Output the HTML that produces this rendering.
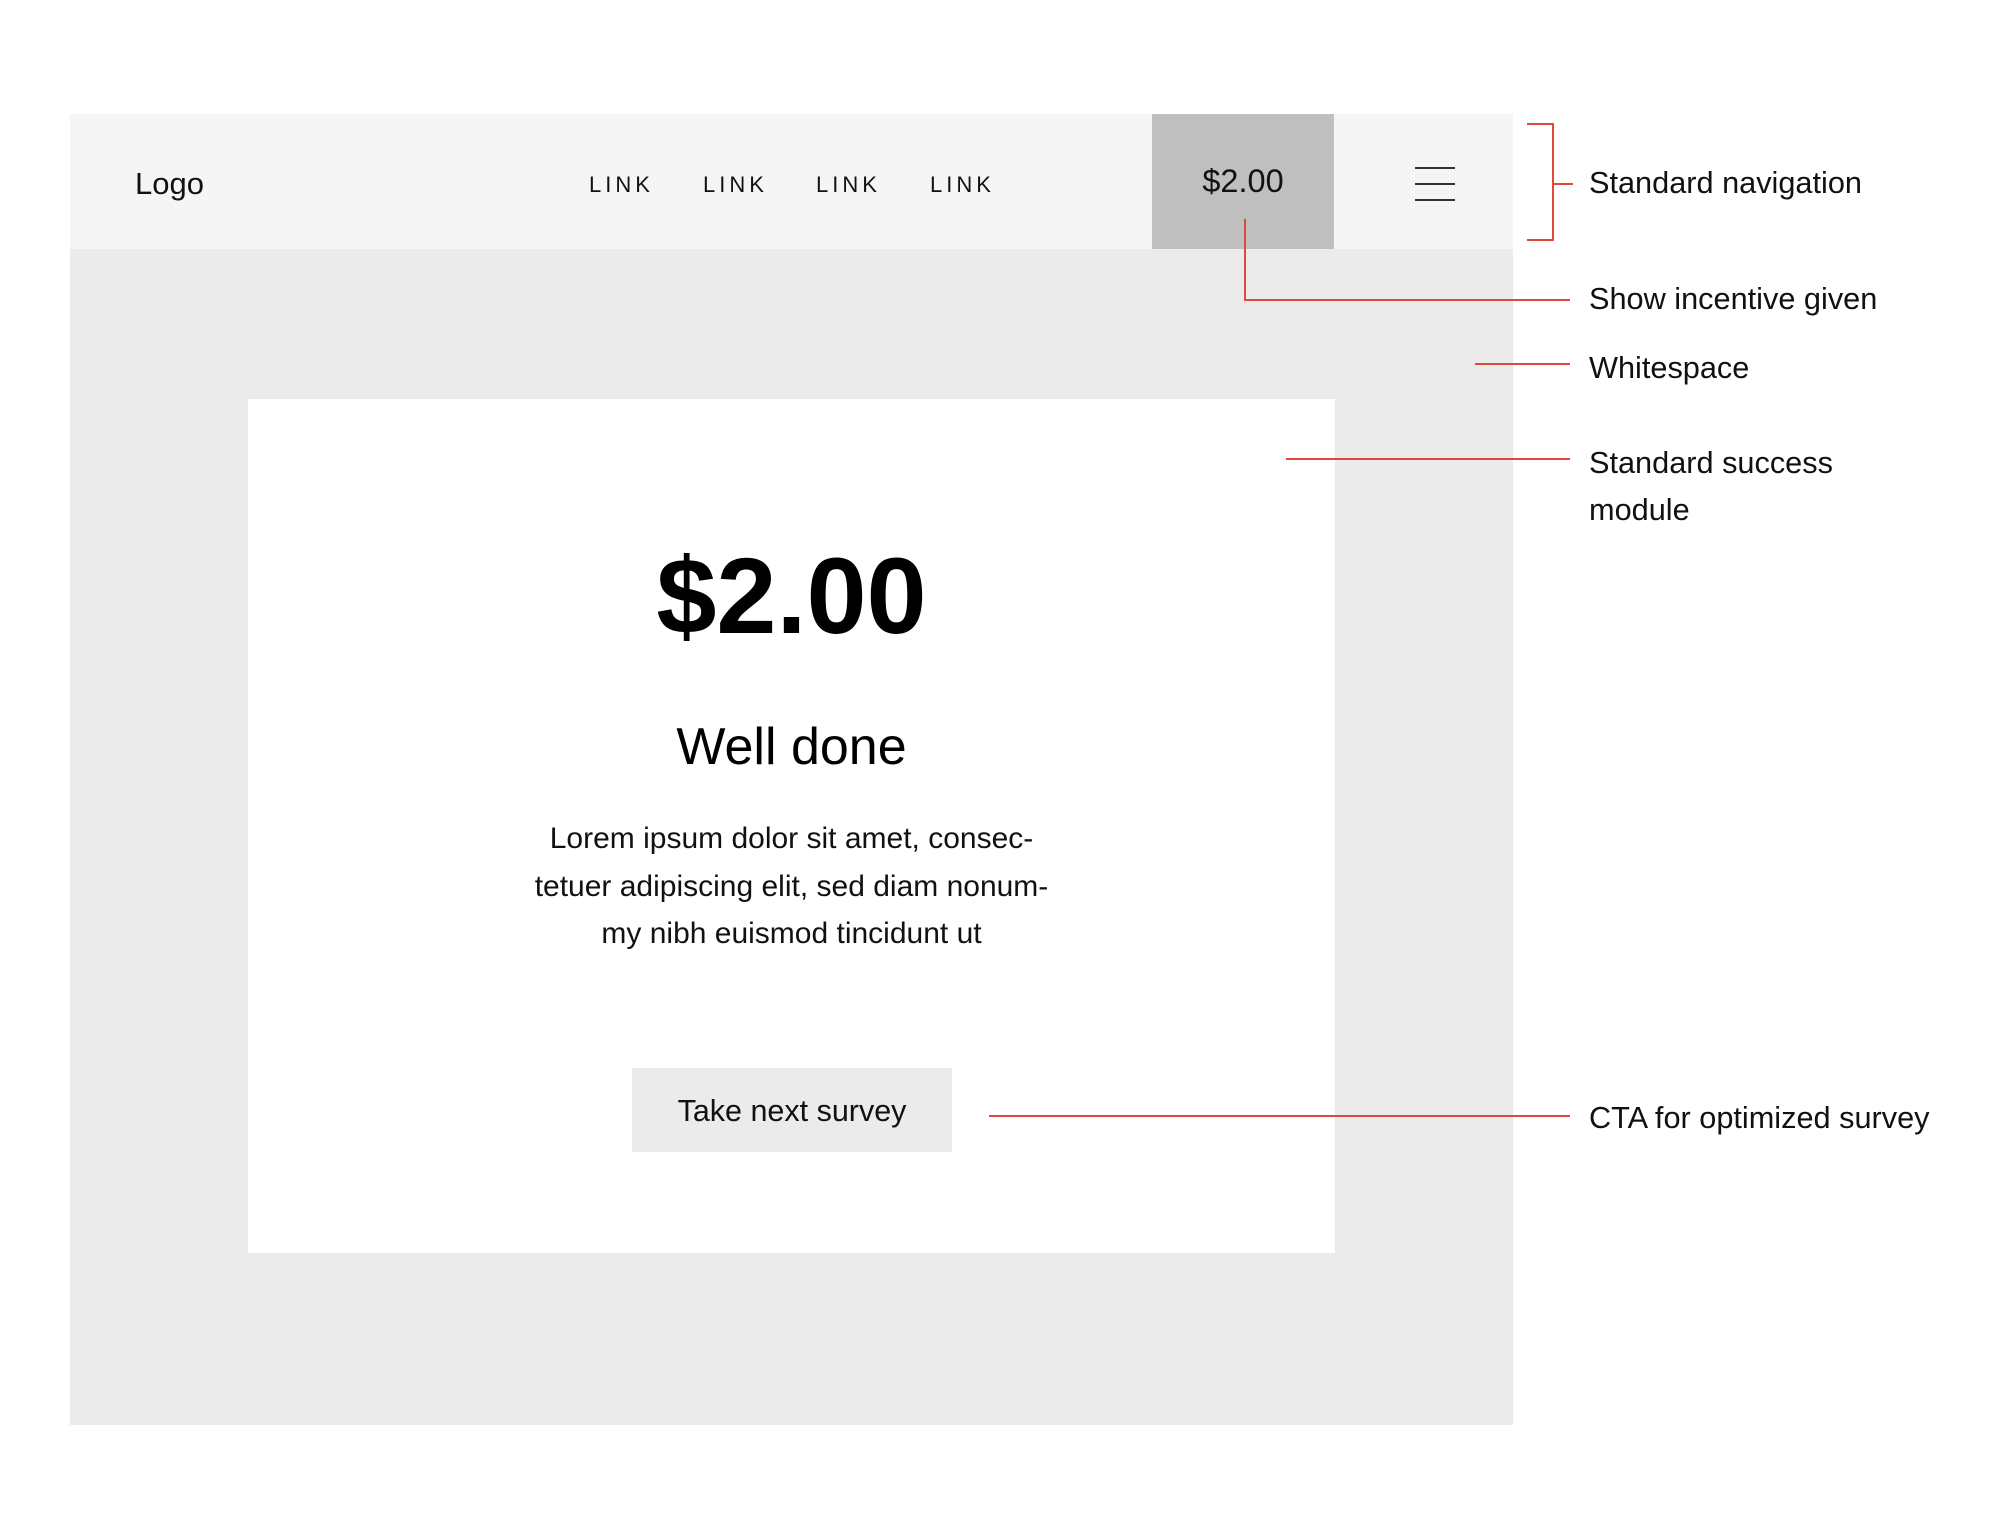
<!DOCTYPE html>
<html><head><meta charset="utf-8"><style>
*{margin:0;padding:0;box-sizing:border-box}
body{width:2000px;height:1529px;background:#fff;position:relative;overflow:hidden;font-family:"Liberation Sans",sans-serif;color:#111}
.a{position:absolute}
.t{position:absolute;line-height:1;white-space:nowrap}
.r{position:absolute;background:#e2473b}
</style></head><body>
<div class="a" style="left:70px;top:114px;width:1443px;height:1311px;background:#ebebeb"></div>
<div class="a" style="left:70px;top:114px;width:1443px;height:135px;background:#f5f5f5"></div>
<div class="a" style="left:1152px;top:114px;width:182px;height:135px;background:#bfbfbf"></div>
<div class="t" style="left:135px;top:168px;font-size:31px">Logo</div>
<div class="t" style="left:589px;top:174px;font-size:22px;letter-spacing:4px">LINK</div>
<div class="t" style="left:703px;top:174px;font-size:22px;letter-spacing:4px">LINK</div>
<div class="t" style="left:816px;top:174px;font-size:22px;letter-spacing:4px">LINK</div>
<div class="t" style="left:930px;top:174px;font-size:22px;letter-spacing:4px">LINK</div>
<div class="t" style="left:1152px;width:182px;text-align:center;top:165px;font-size:32.5px">$2.00</div>
<div class="a" style="left:1415px;top:167px;width:40px;height:2px;background:#333"></div>
<div class="a" style="left:1415px;top:183px;width:40px;height:2px;background:#333"></div>
<div class="a" style="left:1415px;top:199px;width:40px;height:2px;background:#333"></div>

<div class="a" style="left:248px;top:399px;width:1087px;height:854px;background:#fff"></div>
<div class="t" style="left:248px;width:1087px;text-align:center;top:542px;font-size:108px;font-weight:bold;color:#000">$2.00</div>
<div class="t" style="left:248px;width:1087px;text-align:center;top:721px;font-size:52px;color:#000">Well done</div>
<div class="a" style="left:248px;width:1087px;text-align:center;top:815px;font-size:30px;line-height:47.5px;color:#111">Lorem ipsum dolor sit amet, consec-<br>tetuer adipiscing elit, sed diam nonum-<br>my nibh euismod tincidunt ut</div>
<div class="a" style="left:632px;top:1068px;width:320px;height:84px;background:#ebebeb"></div>
<div class="t" style="left:632px;width:320px;text-align:center;top:1096px;font-size:30.5px">Take next survey</div>

<!-- annotations -->
<div class="r" style="left:1527px;top:123px;width:26px;height:2px"></div>
<div class="r" style="left:1552px;top:123px;width:2px;height:118px"></div>
<div class="r" style="left:1527px;top:239px;width:26px;height:2px"></div>
<div class="r" style="left:1553px;top:183px;width:20px;height:2px"></div>
<div class="r" style="left:1244px;top:219px;width:2px;height:82px"></div>
<div class="r" style="left:1244px;top:299px;width:326px;height:2px"></div>
<div class="r" style="left:1475px;top:363px;width:95px;height:1.5px"></div>
<div class="r" style="left:1286px;top:458px;width:284px;height:1.5px"></div>
<div class="r" style="left:989px;top:1115px;width:581px;height:1.5px"></div>
<div class="t" style="left:1589px;top:168px;font-size:30.7px">Standard navigation</div>
<div class="t" style="left:1589px;top:284px;font-size:30.7px">Show incentive given</div>
<div class="t" style="left:1589px;top:353px;font-size:30.7px">Whitespace</div>
<div class="t" style="left:1589px;top:448px;font-size:30.7px">Standard success</div>
<div class="t" style="left:1589px;top:495px;font-size:30.7px">module</div>
<div class="t" style="left:1589px;top:1103px;font-size:30.7px">CTA for optimized survey</div>
</body></html>
